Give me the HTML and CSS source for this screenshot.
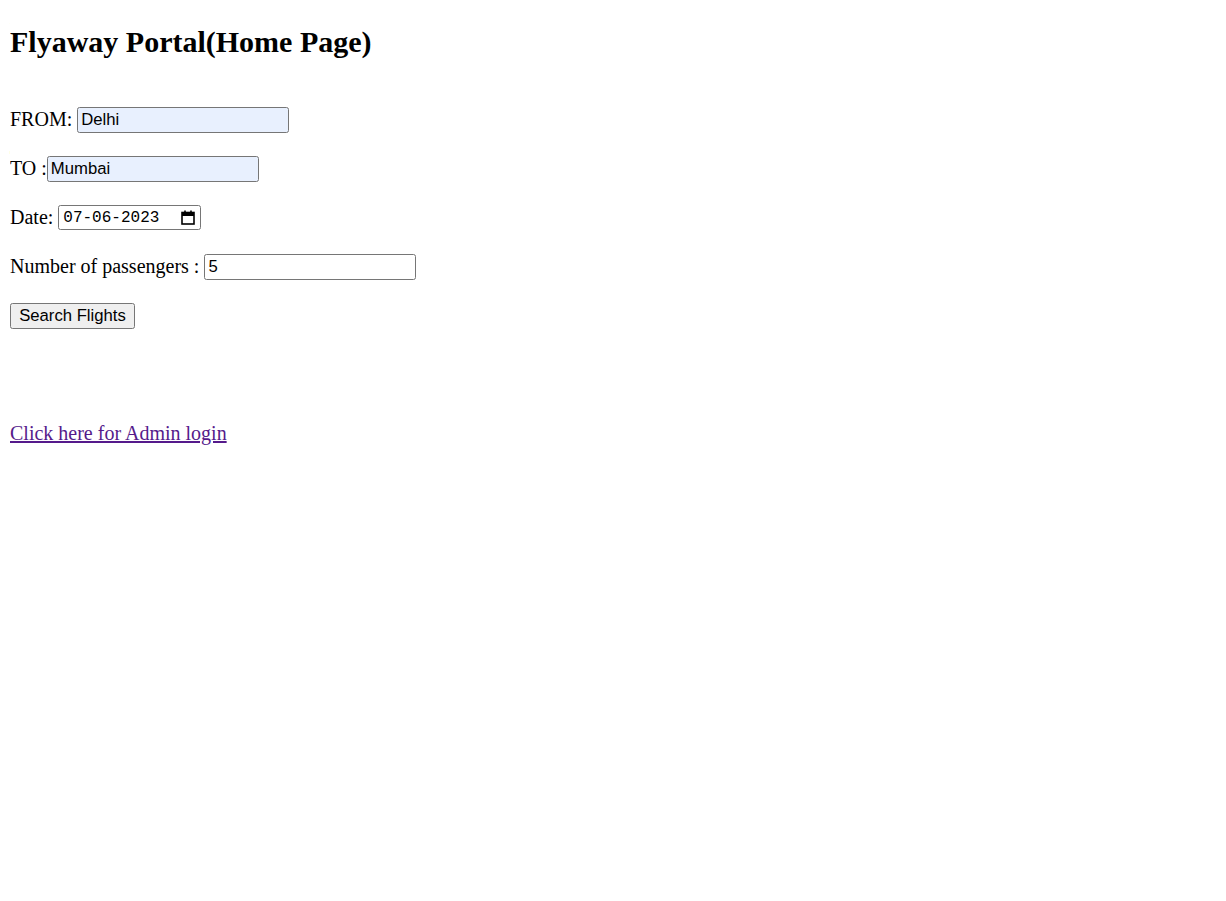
FILE: index.html
```html
<!DOCTYPE html>
<html lang="en">
<head>
<meta charset="utf-8">
<title>Flyaway Portal</title>
<link rel="stylesheet" href="styles.css">
</head>
<body>
<h2 class="title">Flyaway Portal(Home Page)</h2>
<form class="search">
  <div class="row"><label class="lbl">FROM:</label><input class="field autofill" type="text" value="Delhi"></div>
  <div class="row"><label class="lbl tight">TO :</label><input class="field autofill" type="text" value="Mumbai"></div>
  <div class="row"><label class="lbl">Date:</label><div class="date-field"><span class="date-text">07-06-2023</span><svg class="cal" width="14" height="15" viewBox="0 0 14 15"><rect x="1" y="2.5" width="12" height="11.5" fill="none" stroke="#000" stroke-width="1.6"/><rect x="1" y="2.5" width="12" height="3.5" fill="#000"/><path d="M4 0.5v3M10 0.5v3" stroke="#000" stroke-width="1.6"/></svg></div></div>
  <div class="row"><label class="lbl">Number of passengers :</label><input class="field" type="text" value="5"></div>
  <div class="row"><button class="btn" type="button">Search Flights</button></div>
</form>
<a class="admin" href="#">Click here for Admin login</a>
</body>
</html>
```
FILE: styles.css
```css
html { background: #fff; }
body {
  margin: 10px;
  font-family: "Liberation Serif", "Times New Roman", serif;
  font-size: 20px;
  color: #000;
}
.title {
  font-size: 30px;
  font-weight: bold;
  margin: 15px 0 0;
  line-height: normal;
}
.search {
  margin-top: 47.5px;
  display: flex;
  flex-direction: column;
  gap: 23px;
}
.row {
  display: flex;
  align-items: center;
  height: 26px;
}
.lbl { margin-right: 5px; }
.lbl.tight { margin-right: 0; }
.field {
  box-sizing: border-box;
  width: 212px;
  height: 26px;
  margin: 0;
  padding: 1px 3px;
  border: 1px solid #767676;
  border-radius: 2.5px;
  font-family: "Liberation Sans", Arial, sans-serif;
  font-size: 16.7px;
  color: #000;
  background: #fff;
}
.autofill { background: #e8f0fe; }
.date-field {
  box-sizing: border-box;
  width: 143px;
  height: 25px;
  border: 1px solid #767676;
  border-radius: 2.5px;
  display: flex;
  align-items: center;
  justify-content: space-between;
  padding: 0 5px 0 4px;
}
.date-text {
  font-family: "Liberation Mono", "DejaVu Sans Mono", monospace;
  font-size: 16px;
}
.cal { display: block; }
.btn {
  box-sizing: border-box;
  height: 26px;
  width: 125px;
  margin: 0;
  padding: 0 7px;
  border: 1px solid #767676;
  border-radius: 2.5px;
  background: #efefef;
  font-family: "Liberation Sans", Arial, sans-serif;
  font-size: 16.7px;
  color: #000;
}
.admin {
  display: inline-block;
  margin-top: 93px;
  color: #551a8b;
  text-decoration: underline;
}
```
